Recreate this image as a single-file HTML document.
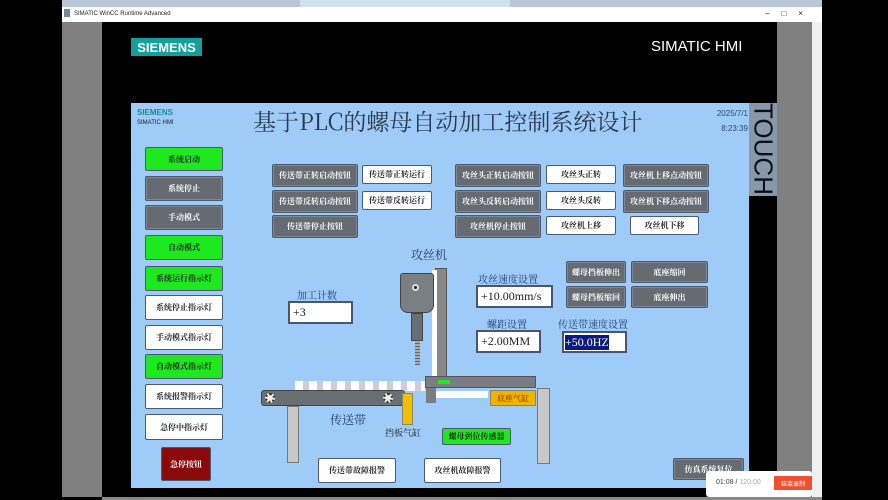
<!DOCTYPE html>
<html><head><meta charset="utf-8"><style>
*{margin:0;padding:0;box-sizing:border-box}
body{width:888px;height:500px;background:#000;position:relative;overflow:hidden;font-family:"Liberation Sans","Noto Sans CJK SC",sans-serif}
.a{position:absolute}
.b{position:absolute;display:flex;align-items:center;justify-content:center;font-size:8px;font-weight:bold;border:1px solid #4a5a70;border-radius:2px;font-family:"Noto Serif CJK SC","Noto Sans CJK SC",serif;white-space:nowrap}
.g{background:#666b72;color:#fff;box-shadow:inset 0 0 0 1px #80868e}
.w{background:#fff;color:#222}
.gr{background:#1ee81e;color:#222}
.lbl{position:absolute;font-family:"Noto Serif CJK SC",serif;color:#203a70;font-size:10px;white-space:nowrap}
.in{position:absolute;background:#fff;border:2px solid #4a5670;font-family:"Liberation Serif",serif;font-size:12px;color:#222;padding-left:3px;display:flex;align-items:center}
</style></head><body>
<div class="a" style="left:62px;top:0;width:760px;height:7px;background:#b8c8d8"></div>
<div class="a" style="left:300px;top:0;width:210px;height:7px;background:#cfe3ef"></div>
<div class="a" style="left:62px;top:7px;width:760px;height:15px;background:#fff;font-size:6px;color:#222;padding:4px 0 0 12px">SIMATIC WinCC Runtime Advanced<span style="position:absolute;left:703px;top:2px;font-size:8px;letter-spacing:12px">–□×</span></div>
<div class="a" style="left:64px;top:9px;width:6px;height:8px;background:#789"></div>
<div class="a" style="left:62px;top:22px;width:40px;height:475px;background:#808080"></div>
<div class="a" style="left:777px;top:22px;width:35px;height:475px;background:#808080"></div>
<div class="a" style="left:812px;top:22px;width:10px;height:475px;background:#f0f0f0"></div>
<div class="a" style="left:102px;top:497px;width:720px;height:3px;background:#888"></div>
<div class="a" style="left:131px;top:38px;width:71px;height:18px;background:#13a09a;color:#fff;font-weight:bold;font-size:13px;display:flex;align-items:center;justify-content:center">SIEMENS</div>
<div class="a" style="left:651px;top:38px;color:#fff;font-size:15px">SIMATIC HMI</div>
<div class="a" style="left:749px;top:103px;width:28px;height:93px;background:#8898a8"></div>
<div class="a" style="left:763px;top:149px;transform:translate(-50%,-50%) rotate(90deg);font-size:26px;color:#0a1020">TOUCH</div>
<div class="a" style="left:131px;top:103px;width:618px;height:385px;background:#9ecbf7"></div>
<div class="a" style="left:137px;top:108px;color:#1a8a9a;font-size:8px;font-weight:bold">SIEMENS</div>
<div class="a" style="left:137px;top:120px;color:#222;font-size:6px">SIMATIC HMI</div>
<div class="a" style="left:253px;top:104px;font-family:'Noto Serif CJK SC',serif;font-size:23px;color:#2a3a50;white-space:nowrap">基于PLC的螺母自动加工控制系统设计</div>
<div class="a" style="left:696px;top:106px;width:52px;text-align:right;font-size:8px;color:#2a4a7a;line-height:15px">2025/7/1<br>8:23:39</div>

<div class="b gr" style="left:145px;top:147px;width:78px;height:24px">系统启动</div>
<div class="b g" style="left:145px;top:176px;width:78px;height:25px">系统停止</div>
<div class="b g" style="left:145px;top:205px;width:78px;height:25px">手动模式</div>
<div class="b gr" style="left:145px;top:235px;width:78px;height:25px">自动模式</div>
<div class="b gr" style="left:145px;top:266px;width:78px;height:25px">系统运行指示灯</div>
<div class="b w" style="left:145px;top:295px;width:78px;height:25px">系统停止指示灯</div>
<div class="b w" style="left:145px;top:325px;width:78px;height:25px">手动模式指示灯</div>
<div class="b gr" style="left:145px;top:354px;width:78px;height:25px">自动模式指示灯</div>
<div class="b w" style="left:145px;top:384px;width:78px;height:25px">系统报警指示灯</div>
<div class="b w" style="left:145px;top:414px;width:78px;height:26px">急停中指示灯</div>
<div class="b" style="left:161px;top:447px;width:50px;height:34px;background:#8a0a0a;color:#fff">急停按钮</div>

<div class="b g" style="left:272px;top:164px;width:86px;height:23px">传送带正转启动按钮</div>
<div class="b w" style="left:362px;top:165px;width:70px;height:19px">传送带正转运行</div>
<div class="b g" style="left:272px;top:190px;width:86px;height:23px">传送带反转启动按钮</div>
<div class="b w" style="left:362px;top:191px;width:70px;height:19px">传送带反转运行</div>
<div class="b g" style="left:272px;top:215px;width:86px;height:23px">传送带停止按钮</div>
<div class="b g" style="left:455px;top:164px;width:86px;height:23px">攻丝头正转启动按钮</div>
<div class="b w" style="left:546px;top:165px;width:70px;height:19px">攻丝头正转</div>
<div class="b g" style="left:623px;top:164px;width:86px;height:23px">攻丝机上移点动按钮</div>
<div class="b g" style="left:455px;top:190px;width:86px;height:23px">攻丝头反转启动按钮</div>
<div class="b w" style="left:546px;top:191px;width:70px;height:19px">攻丝头反转</div>
<div class="b g" style="left:623px;top:190px;width:86px;height:23px">攻丝机下移点动按钮</div>
<div class="b g" style="left:455px;top:215px;width:86px;height:23px">攻丝机停止按钮</div>
<div class="b w" style="left:546px;top:216px;width:70px;height:19px">攻丝机上移</div>
<div class="b w" style="left:630px;top:216px;width:69px;height:19px">攻丝机下移</div>

<div class="lbl" style="left:411px;top:246px;font-size:12px">攻丝机</div>
<div class="lbl" style="left:297px;top:287px">加工计数</div>
<div class="in" style="left:288px;top:301px;width:65px;height:23px">+3</div>
<div class="lbl" style="left:478px;top:271px">攻丝速度设置</div>
<div class="in" style="left:476px;top:285px;width:77px;height:23px">+10.00mm/s</div>
<div class="lbl" style="left:487px;top:316px">螺距设置</div>
<div class="in" style="left:476px;top:330px;width:65px;height:23px">+2.00MM</div>
<div class="lbl" style="left:558px;top:316px">传送带速度设置</div>
<div class="in" style="left:562px;top:331px;width:65px;height:22px;padding-left:1px"><span style="background:#0a1a80;color:#fff">+50.0HZ</span></div>
<div class="b g" style="left:566px;top:261px;width:60px;height:22px">螺母挡板伸出</div>
<div class="b g" style="left:631px;top:261px;width:77px;height:22px">底座缩回</div>
<div class="b g" style="left:566px;top:286px;width:60px;height:22px">螺母挡板缩回</div>
<div class="b g" style="left:631px;top:286px;width:77px;height:22px">底座伸出</div>

<div class="a" style="left:435px;top:268px;width:12px;height:110px;background:#888;border:1px solid #555"></div>
<div class="a" style="left:432px;top:270px;width:5px;height:108px;background:#fff"></div>
<div class="a" style="left:400px;top:273px;width:34px;height:40px;background:#7a7f84;border:1px solid #444;border-radius:3px 3px 8px 8px"></div>
<div class="a" style="left:412px;top:284px;width:7px;height:7px;background:#222;border-radius:50%;border:2px solid #ddd"></div>
<div class="a" style="left:411px;top:313px;width:12px;height:28px;background:#6a6f74;border:1px solid #444"></div>
<div class="a" style="left:415px;top:341px;width:5px;height:24px;background:repeating-linear-gradient(#aaa 0 2px,#666 2px 3px)"></div>
<div class="a" style="left:425px;top:376px;width:111px;height:12px;background:#7a7e82;border:1px solid #555"></div>
<div class="a" style="left:426px;top:388px;width:10px;height:15px;background:#7a7e82"></div>
<div class="a" style="left:436px;top:391px;width:52px;height:7px;background:#fff"></div>
<div class="a" style="left:438px;top:380px;width:12px;height:4px;background:#1ee81e"></div>
<div class="a" style="left:490px;top:390px;width:46px;height:16px;background:#f0b400;border:1px solid #886;font-family:'Noto Serif CJK SC',serif;font-size:8px;color:#7a2a00;display:flex;align-items:center;justify-content:center">底座气缸</div>
<div class="a" style="left:537px;top:388px;width:13px;height:76px;background:#c8c8c8;border:1px solid #777"></div>
<div class="a" style="left:295px;top:381px;width:130px;height:10px;background:repeating-linear-gradient(90deg,#fff 0 8px,#ccd 8px 14px)"></div>
<div class="a" style="left:261px;top:390px;width:144px;height:16px;background:#6a6f74;border:1px solid #444;border-radius:3px"></div>
<div class="a" style="left:265px;top:393px;width:10px;height:10px;border-radius:50%;background:#eee;border:2px dotted #333"></div>
<div class="a" style="left:383px;top:393px;width:10px;height:10px;border-radius:50%;background:#eee;border:2px dotted #333"></div>
<div class="a" style="left:287px;top:406px;width:12px;height:57px;background:#c8c8c8;border:1px solid #777"></div>
<div class="a" style="left:402px;top:393px;width:11px;height:32px;background:#f0c000;border:1px solid #886"></div>
<div class="lbl" style="left:330px;top:411px;font-size:12px">传送带</div>
<div class="lbl" style="left:385px;top:426px;font-size:9px;color:#222">挡板气缸</div>
<div class="b gr" style="left:442px;top:428px;width:69px;height:17px">螺母到位传感器</div>
<div class="b w" style="left:318px;top:458px;width:78px;height:25px">传送带故障报警</div>
<div class="b w" style="left:424px;top:458px;width:77px;height:25px">攻丝机故障报警</div>
<div class="b g" style="left:673px;top:458px;width:71px;height:22px">仿真系统复位</div>

<div class="a" style="left:706px;top:471px;width:106px;height:26px;background:#fff;border-radius:3px"></div>
<div class="a" style="left:716px;top:479px;font-size:7px;color:#444">01:08 / <span style="color:#aaa">120:00</span></div>
<div class="a" style="left:774px;top:476px;width:38px;height:14px;background:#f05030;color:#fff;font-size:6px;display:flex;align-items:center;justify-content:center">结束录制</div>
</body></html>
